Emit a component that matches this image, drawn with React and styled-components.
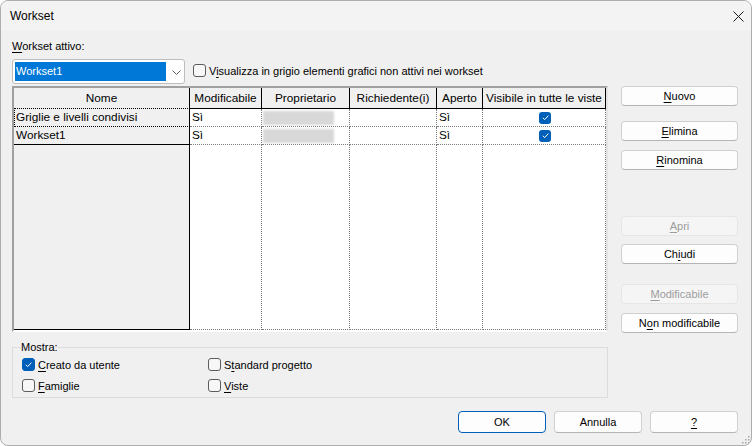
import React from 'react'
import styled, { createGlobalStyle } from 'styled-components'

const GlobalStyle = createGlobalStyle`
  html, body {
    margin: 0;
    padding: 0;
    background: #ffffff;
  }
  body {
    font-family: "Liberation Sans", Arial, sans-serif;
    color: #000;
  }
`

const Window = styled.div`
  position: relative;
  width: 752px;
  height: 446px;
  box-sizing: border-box;
  border: 1px solid #adadad;
  border-radius: 8px;
  overflow: hidden;
  background: #f0f0f0;
  display: flex;
  flex-direction: column;
`
const TitleBar = styled.div`
  height: 30px;
  flex: none;
  background: #f3f3f3;
  display: flex;
  align-items: center;
  justify-content: space-between;
  padding-left: 9px;
  font-size: 12px;
`
const CloseIcon = styled.svg`
  margin-right: 7px;
`
const Body = styled.div`
  display: flex;
  flex-direction: column;
  padding: 8px 13px 0 11px;
  font-size: 11px;
`
const Label = styled.div`
  height: 14px;
  line-height: 14px;
`
const U = styled.span`
  text-decoration: underline;
  text-underline-offset: 2px;
`
const ComboRow = styled.div`
  margin-top: 6px;
  display: flex;
  align-items: flex-start;
  gap: 8px;
`
const Combo = styled.div`
  width: 173px;
  height: 25px;
  box-sizing: border-box;
  border: 1px solid #bdbdbd;
  border-radius: 3px;
  background: #fff;
  display: flex;
  align-items: flex-start;
  padding: 2px;
`
const ComboValue = styled.div`
  width: 151px;
  height: 19px;
  background: #0078d7;
  color: #fff;
  line-height: 19px;
  padding-left: 1px;
  box-sizing: border-box;
`
const Chevron = styled.svg`
  margin: 8px 0 0 6px;
`
const Check = styled.label`
  display: flex;
  align-items: center;
  gap: 3px;
  height: 21px;
  margin-top: ${p => p.$top || 0}px;
  white-space: nowrap;
`
const Box = styled.span`
  width: 13px;
  height: 13px;
  box-sizing: border-box;
  border-radius: 3px;
  border: 1px solid ${p => (p.$on ? '#005fb8' : '#5c5c5c')};
  background: ${p => (p.$on ? '#005fb8' : '#f7f7f7')};
  display: flex;
  align-items: center;
  justify-content: center;
  flex: none;
`
const MainRow = styled.div`
  margin-top: 2px;
  display: flex;
  gap: 13px;
`
const Grid = styled.div`
  width: 596px;
  height: 246px;
  box-sizing: border-box;
  border-style: solid;
  border-width: 2px;
  border-color: #a0a0a0 #e3e3e3 #ffffff #a0a0a0;
  background: #fff;
  display: grid;
  grid-template-columns: 176px 72px 88px 87px 46px 123px;
  grid-template-rows: 21px 18px 18px 1fr;
  font-size: 11.8px;
`
const HeadCell = styled.div`
  background: #f0f0f0;
  border-right: 1px solid #000;
  border-bottom: 1px solid #000;
  text-align: center;
  line-height: 20px;
  white-space: nowrap;
  overflow: hidden;
`
const NameCell = styled.div`
  background: #f0f0f0;
  box-sizing: border-box;
  border-right: 1px solid #000;
  border-bottom: 1px ${p => (p.$focus ? 'dotted' : 'solid')} #000;
  border-top: ${p => (p.$focus ? '1px dotted #000' : 'none')};
  border-left: ${p => (p.$focus ? '1px dotted #000' : 'none')};
  padding-left: ${p => (p.$focus ? '1px' : '2px')};
  line-height: ${p => (p.$focus ? '16px' : '17px')};
  margin-top: ${p => (p.$focus ? '-1px' : '0')};
  white-space: nowrap;
`
const DataCell = styled.div`
  border-right: 1px dotted #7a7a7a;
  border-bottom: 1px dotted #7a7a7a;
  padding-left: 2px;
  line-height: 17px;
  display: flex;
  align-items: center;
  justify-content: ${p => (p.$center ? 'center' : 'flex-start')};
`
const Blurred = styled.div`
  width: 71px;
  height: 14px;
  margin-left: -1px;
  background: #d8d8d8;
  filter: blur(1px);
`
const GridTick = styled.span`
  width: 12px;
  height: 12px;
  border-radius: 3px;
  background: #005fb8;
  display: flex;
  align-items: center;
  justify-content: center;
`
const ButtonCol = styled.div`
  width: 117px;
  display: flex;
  flex-direction: column;
`
const Button = styled.div`
  box-sizing: border-box;
  height: ${p => p.$h || 20}px;
  width: ${p => p.$w || 117}px;
  margin-top: ${p => p.$top || 0}px;
  border: 1px solid ${p => (p.$default ? '#005fb8' : p.$disabled ? '#e6e6e6' : '#d0d0d0')};
  border-bottom-color: ${p => (p.$default ? '#005fb8' : p.$disabled ? '#e6e6e6' : '#b5b5b5')};
  border-radius: 4px;
  background: ${p => (p.$disabled ? '#f5f5f5' : '#fdfdfd')};
  color: ${p => (p.$disabled ? '#9d9d9d' : '#000')};
  display: flex;
  align-items: center;
  justify-content: center;
  font-size: 11px;
`
const Group = styled.fieldset`
  margin: 7px 0 0 0;
  width: 596px;
  box-sizing: border-box;
  border: 1px solid #dcdcdc;
  padding: 0 0 1px 9px;
  min-width: 0;
`
const Legend = styled.legend`
  padding: 0;
  line-height: 14px;
  margin-left: -1px;
`
const GroupGrid = styled.div`
  display: grid;
  grid-template-columns: 186px auto;
  grid-template-rows: 21px 21px;
`
const Footer = styled.div`
  margin-top: 13px;
  display: flex;
  justify-content: flex-end;
  gap: 8px;
`
const Grip = styled.svg`
  position: absolute;
  right: 1px;
  bottom: 1px;
`

const Tick = () => (
  <svg width="11" height="11" viewBox="0 0 11 11">
    <path d="M2.8 5.8 L4.7 7.6 L8.4 3.6" fill="none" stroke="#fff" strokeWidth="1" />
  </svg>
)

const CheckItem = ({ on, top, children }) => (
  <Check $top={top}>
    <Box $on={on}>{on && <Tick />}</Box>
    <span>{children}</span>
  </Check>
)

const rows = [
  { name: 'Griglie e livelli condivisi', focus: true },
  { name: 'Workset1' },
]

export default function App() {
  return (
    <>
      <GlobalStyle />
      <Window>
        <TitleBar>
          <span>Workset</span>
          <CloseIcon width="11" height="11" viewBox="0 0 11 11">
            <path d="M0.5 0.5 L10.5 10.5 M10.5 0.5 L0.5 10.5" stroke="#1a1a1a" strokeWidth="1" />
          </CloseIcon>
        </TitleBar>
        <Body>
          <Label><U>W</U>orkset attivo:</Label>
          <ComboRow>
            <Combo>
              <ComboValue>Workset1</ComboValue>
              <Chevron width="9" height="5" viewBox="0 0 9 5">
                <polyline points="0.5,0.5 4.5,4.5 8.5,0.5" fill="none" stroke="#5f5f5f" strokeWidth="1" />
              </Chevron>
            </Combo>
            <CheckItem top={1}>V<U>i</U>sualizza in grigio elementi grafici non attivi nei workset</CheckItem>
          </ComboRow>
          <MainRow>
            <Grid>
              <HeadCell>Nome</HeadCell>
              <HeadCell>Modificabile</HeadCell>
              <HeadCell>Proprietario</HeadCell>
              <HeadCell>Richiedente(i)</HeadCell>
              <HeadCell>Aperto</HeadCell>
              <HeadCell>Visibile in tutte le viste</HeadCell>
              {rows.map(r => (
                <React.Fragment key={r.name}>
                  <NameCell $focus={r.focus}>{r.name}</NameCell>
                  <DataCell>Sì</DataCell>
                  <DataCell><Blurred /></DataCell>
                  <DataCell />
                  <DataCell>Sì</DataCell>
                  <DataCell $center>
                    <GridTick><Tick /></GridTick>
                  </DataCell>
                </React.Fragment>
              ))}
              <NameCell />
              <DataCell />
              <DataCell />
              <DataCell />
              <DataCell />
              <DataCell />
            </Grid>
            <ButtonCol>
              <Button><U>N</U>uovo</Button>
              <Button $top={15}><U>E</U>limina</Button>
              <Button $top={9}><U>R</U>inomina</Button>
              <Button $top={46} $disabled><U>A</U>pri</Button>
              <Button $top={8}>Ch<U>i</U>udi</Button>
              <Button $top={20} $disabled><U>M</U>odificabile</Button>
              <Button $top={9}>N<U>o</U>n modificabile</Button>
            </ButtonCol>
          </MainRow>
          <Group>
            <Legend>Mostra:</Legend>
            <GroupGrid>
              <CheckItem on><U>C</U>reato da utente</CheckItem>
              <CheckItem>S<U>t</U>andard progetto</CheckItem>
              <CheckItem><U>F</U>amiglie</CheckItem>
              <CheckItem><U>V</U>iste</CheckItem>
            </GroupGrid>
          </Group>
          <Footer>
            <Button $w={88} $h={22} $default>OK</Button>
            <Button $w={88} $h={22}>Annulla</Button>
            <Button $w={88} $h={22}><U>?</U></Button>
          </Footer>
        </Body>
        <Grip width="9" height="9" viewBox="0 0 9 9">
          {[[7, 1], [4, 4], [7, 4], [1, 7], [4, 7], [7, 7]].map(([x, y]) => (
            <rect key={`${x}-${y}`} x={x} y={y} width="1.5" height="1.5" fill="#a8a8a8" />
          ))}
        </Grip>
      </Window>
    </>
  )
}
